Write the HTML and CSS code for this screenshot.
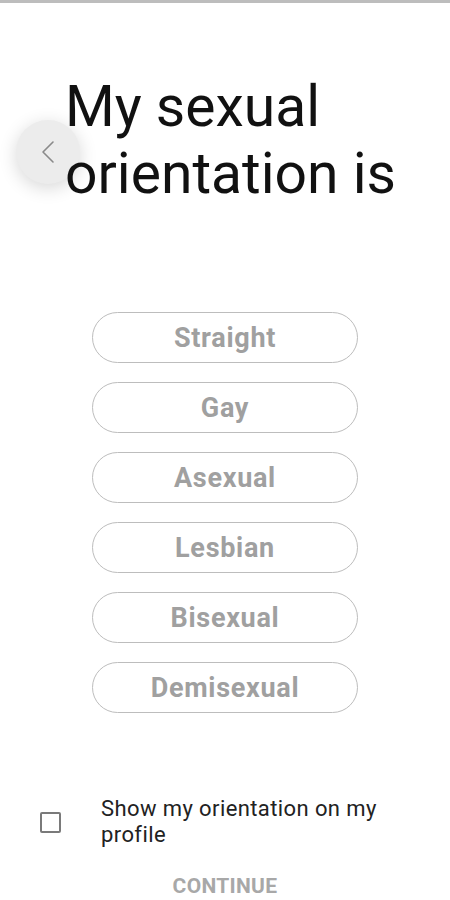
FILE: index.html
```html
<!DOCTYPE html>
<html>
<head>
<meta charset="utf-8">
<link rel="stylesheet" href="styles.css">
</head>
<body>
<div class="screen">
  <div class="topbar"></div>
  <button class="back" aria-label="Back">
    <svg width="14" height="24" viewBox="0 0 14 24"><path d="M12 2 L2 12 L12 22" fill="none" stroke="#8a8a8a" stroke-width="1.6" stroke-linecap="round" stroke-linejoin="round"/></svg>
  </button>
  <h1 class="title">My sexual orientation is</h1>
  <div class="options">
    <div class="option">Straight</div>
    <div class="option">Gay</div>
    <div class="option">Asexual</div>
    <div class="option">Lesbian</div>
    <div class="option">Bisexual</div>
    <div class="option">Demisexual</div>
  </div>
  <div class="footer">
    <label class="show">
      <span class="box"></span>
      <span class="show-text">Show my orientation on my profile</span>
    </label>
    <div class="continue">CONTINUE</div>
  </div>
</div>
</body>
</html>
```
FILE: styles.css
```css
html, body {
  margin: 0;
  padding: 0;
  background: #fff;
}
.screen {
  position: relative;
  width: 450px;
  height: 900px;
  font-family: Roboto, "Noto Sans", sans-serif;
  display: flex;
  flex-direction: column;
  overflow: hidden;
}
.topbar {
  height: 3px;
  background: #bdbdbd;
}
.back {
  position: absolute;
  left: 16px;
  top: 120px;
  width: 64px;
  height: 64px;
  border-radius: 50%;
  border: none;
  background: #ececec;
  box-shadow: 0 4px 18px rgba(0,0,0,0.16);
  display: flex;
  align-items: center;
  justify-content: center;
  padding: 0;
}
.title {
  position: relative;
  margin: 70px 0 0 65px;
  font-size: 57px;
  line-height: 67px;
  font-weight: 400;
  color: #111;
  width: 360px;
}
.options {
  display: flex;
  flex-direction: column;
  align-items: center;
  gap: 19px;
  margin-top: 105px;
}
.option {
  box-sizing: border-box;
  width: 266px;
  height: 51px;
  border: 1.5px solid #bdbdbd;
  border-radius: 26px;
  display: flex;
  align-items: center;
  justify-content: center;
  font-size: 27px;
  letter-spacing: 0.7px;
  font-weight: 700;
  color: #a0a0a0;
}
.footer {
  margin-top: auto;
  padding-bottom: 2px;
}
.show {
  display: flex;
  align-items: center;
  padding-left: 40px;
}
.box {
  width: 17px;
  height: 17px;
  border: 2px solid #7a7a7a;
  border-radius: 2px;
  flex: none;
}
.show-text {
  margin-left: 40px;
  font-size: 22px;
  letter-spacing: 0.4px;
  line-height: 26px;
  color: #222;
  width: 300px;
}
.continue {
  text-align: center;
  margin-top: 26px;
  font-size: 21px;
  font-weight: 700;
  letter-spacing: 0.3px;
  color: #a8a8a8;
  line-height: 24px;
}
```
